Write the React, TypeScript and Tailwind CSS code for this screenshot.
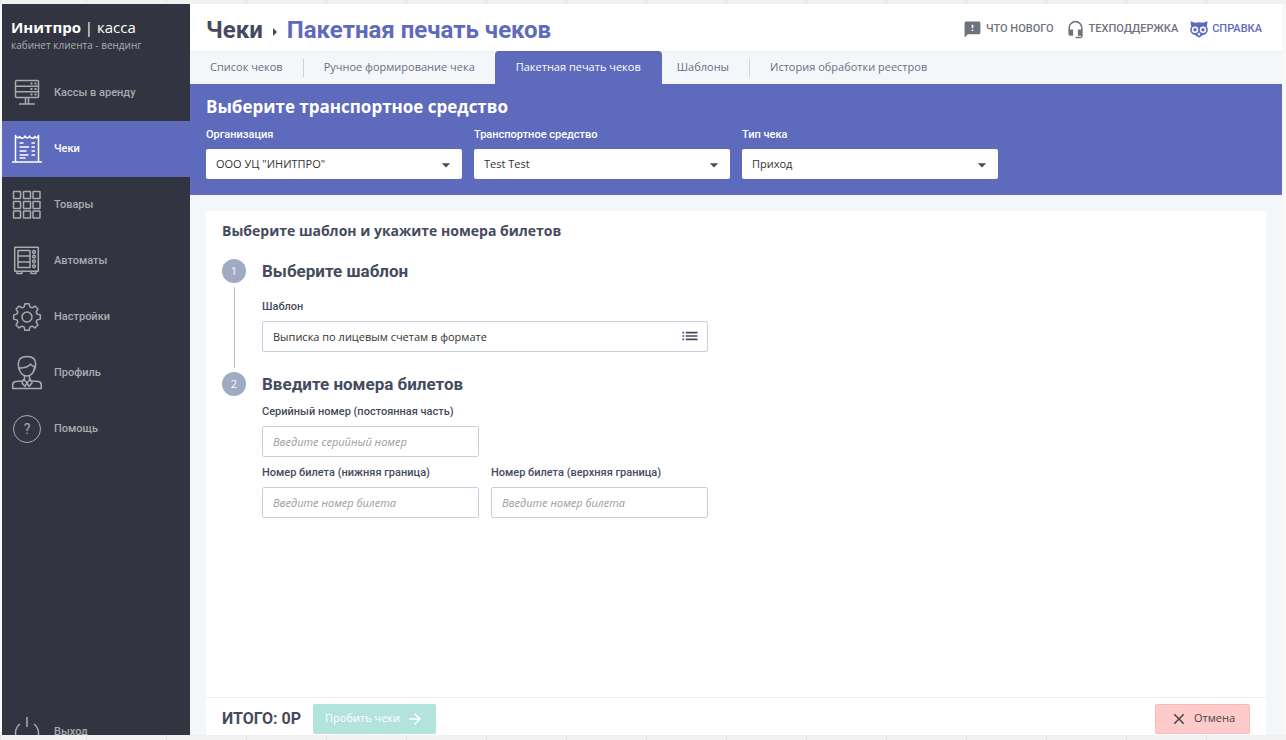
import type { ReactNode } from "react";
import {
  MdArrowForward,
  MdArrowDropDown,
  MdClose,
  MdFeedback,
  MdHeadsetMic,
  MdList,
} from "react-icons/md";

const gearPoints = Array.from({ length: 8 }, (_, i) => i * 45)
  .flatMap((angle) => [
    [10.5, angle - 16],
    [13.5, angle - 9],
    [13.5, angle + 9],
    [10.5, angle + 16],
  ])
  .map(([r, a]) => {
    const rad = (a * Math.PI) / 180;
    return `${(15 + r * Math.cos(rad)).toFixed(2)},${(15 + r * Math.sin(rad)).toFixed(2)}`;
  })
  .join(" ");

function MenuIcon({ children }: { children: ReactNode }) {
  return (
    <svg
      viewBox="0 0 30 30"
      className="h-[30px] w-[30px] shrink-0 overflow-visible"
      fill="none"
      stroke="currentColor"
      strokeWidth="1.5"
      strokeLinejoin="round"
      aria-hidden="true"
    >
      {children}
    </svg>
  );
}

const menu = [
  {
    label: "Кассы в аренду",
    icon: (
      <MenuIcon>
        <rect x="3.5" y="2.5" width="23" height="17" rx="1" />
        <path d="M3.5 8.2h23M3.5 13.8h23M13.5 19.5v6M16.5 19.5v6M7 26h16" />
        <path d="M18.5 5.4h2M22.5 5.4h2M18.5 11h2M22.5 11h2M18.5 16.6h2M22.5 16.6h2" strokeWidth="2" />
      </MenuIcon>
    ),
  },
  {
    label: "Чеки",
    active: true,
    icon: (
      <MenuIcon>
        <path d="M3.500 28V1.500C4 4 7 4.500 7.500 2.500 9 5 12 5 13 2c1 2.500 3.500 2.500 4.500 0 1 3 4 3 5.500.5.500 2 3 1.500 3.500-1V28M0 28h30" />
        <path d="M7.500 9h4M7.500 13h9.500M7.500 17h7M7.500 21h9M7.500 24h6M19.500 9h3.500M19.500 13h3.500M19.500 17h3.500M19.500 21h3.500" />
      </MenuIcon>
    ),
  },
  {
    label: "Товары",
    icon: (
      <MenuIcon>
        {[1.5, 11.5, 21].map((y) =>
          [1.5, 11.5, 21].map((x) => (
            <rect key={`${x}-${y}`} x={x} y={y} width="7" height="7" rx="0.5" />
          ))
        )}
      </MenuIcon>
    ),
  },
  {
    label: "Автоматы",
    icon: (
      <MenuIcon>
        <rect x="2.7" y="1.2" width="23.6" height="24" rx="0.5" />
        <rect x="6" y="4.500" width="12" height="17" />
        <path d="M6 10h12M6 16h12M5 25.500v2h5v-2M19 25.500v2h5v-2" />
        <circle cx="22" cy="6" r="1.4" />
        <circle cx="22" cy="10.700" r="1.4" />
        <circle cx="22" cy="15.500" r="1.4" />
        <circle cx="22" cy="20.300" r="1.4" />
      </MenuIcon>
    ),
  },
  {
    label: "Настройки",
    icon: (
      <MenuIcon>
        <polygon points={gearPoints} />
        <circle cx="15" cy="15" r="5" />
      </MenuIcon>
    ),
  },
  {
    label: "Профиль",
    icon: (
      <MenuIcon>
        <path d="M8 12.500C6.300 10.500 6.300 8 6.300 6c0-5 3.700-7.500 8.700-7.500s8.700 2.500 8.700 7.500c0 2 0 4.500-1.700 6.500" />
        <path d="M7 10c5 .3 8.500-.5 11.500-4 .8 1.500 2 2 4 2.500 0 6-3.500 9.500-7.500 9.500S7.300 14.500 7 10Z" />
        <path d="M12.500 18v3.500M17.500 18v3.500M15 24.500l-3.500-3-1.500 3.500 3 3.500 2-4 2 4 3-3.500-1.500-3.500Z" />
        <path d="M10.500 23l-7 .6C1.500 24 .7 25.500.7 27v3.500h28.600V27c0-1.500-.8-3-2.800-3.400l-7-.6" />
      </MenuIcon>
    ),
  },
  {
    label: "Помощь",
    icon: (
      <span className="flex h-7 w-[30px] items-center justify-center" aria-hidden="true">
        <span className="flex h-7 w-7 items-center justify-center rounded-full border border-current text-sm font-normal">
          ?
        </span>
      </span>
    ),
  },
];

function MenuItem({ label, icon, active }: { label: string; icon: ReactNode; active?: boolean }) {
  return (
    <a
      href="#"
      className={`flex h-14 shrink-0 items-center gap-3 px-2.5 font-[Roboto,sans-serif] text-[11px] font-medium ${
        active ? "bg-[#5e6abc] text-white" : "text-[#a9abb0]"
      }`}
    >
      {icon}
      {label}
    </a>
  );
}

const tabs = [
  { label: "Список чеков" },
  { label: "Ручное формирование чека" },
  { label: "Пакетная печать чеков", active: true },
  { label: "Шаблоны" },
  { label: "История обработки реестров" },
];

const filters = [
  { id: "org", label: "Организация", value: 'ООО УЦ "ИНИТПРО"' },
  { id: "vehicle", label: "Транспортное средство", value: "Test Test" },
  { id: "type", label: "Тип чека", value: "Приход" },
];

function Field({ id, label, placeholder }: { id: string; label: string; placeholder: string }) {
  return (
    <div className="w-[217px]">
      <label htmlFor={id} className="block font-[Roboto,sans-serif] text-[11px] leading-4 font-medium">
        {label}
      </label>
      <input
        id={id}
        placeholder={placeholder}
        className="mt-1.5 h-[31px] w-full rounded-xs border border-[#c5d0e0] px-2.5 text-[11px] placeholder:text-[#9b9b9b] placeholder:italic"
      />
    </div>
  );
}

function StepNumber({ value }: { value: number }) {
  return (
    <span className="flex h-6 w-6 shrink-0 items-center justify-center rounded-full bg-[#a1aac3] text-[11px] text-white">
      {value}
    </span>
  );
}

function OwlIcon() {
  return (
    <svg viewBox="0 0 18 17" className="h-[17px] w-[18px]" fill="currentColor" aria-hidden="true">
      <path d="M.7.3 5 1.800c2.600-.7 5.400-.7 8 0L17.300.3c.2 2-.1 3.700-.6 5.200.8 1 1.100 2 1.100 3.200 0 2.700-2 4.900-4.700 5.200L9 16.800l-4.100-2.900C2.200 13.600.2 11.400.2 8.700c0-1.200.4-2.200 1.100-3.200C.8 4 .5 2.300.7.3Z" />
      <circle cx="5" cy="8.800" r="3.200" fill="#fff" />
      <circle cx="13" cy="8.800" r="3.200" fill="#fff" />
      <circle cx="5" cy="8.800" r="1.700" />
      <circle cx="13" cy="8.800" r="1.700" />
      <path d="M9 11.500l1.500 1.700L9 15l-1.500-1.800Z" fill="#fff" />
    </svg>
  );
}

export default function App() {
  return (
    <div className="h-screen bg-[repeating-linear-gradient(90deg,#f1f1f1_0_79px,#e4e4e4_79px_80px)] bg-[position:7px_0] pt-1 pb-[5px] font-['Open_Sans',sans-serif] text-[#454b5e]">
      <div className="flex h-full bg-[#f8f8f8] pr-1 pl-0.5">
        <aside className="flex w-[188px] shrink-0 flex-col overflow-hidden bg-[#323541]">
          <div className="h-[61px] shrink-0 px-[9px] pt-[11px]">
            <div className="text-[15px] leading-6 text-white">
              <b>Инитпро</b> | касса
            </div>
            <div className="text-[10px] leading-3 text-[#a9abb0]">кабинет клиента - вендинг</div>
          </div>
          <nav className="flex min-h-0 flex-1 flex-col">
            {menu.map((item) => (
              <MenuItem key={item.label} {...item} />
            ))}
          </nav>
          <div className="h-[31px] shrink-0 overflow-hidden">
            <MenuItem
              label="Выход"
              icon={
                <MenuIcon>
                  <path d="M15 0v10M8 7a11.500 11.500 0 1 0 14 0" />
                </MenuIcon>
              }
            />
          </div>
        </aside>

        <main className="flex min-w-0 flex-1 flex-col bg-[#f3f7fa]">
          <header className="z-10 flex h-[47px] shrink-0 items-center justify-between bg-white pt-1 pr-5 pl-4 font-[Roboto,sans-serif] shadow-xs">
            <h1 className="flex items-center text-2xl font-bold">
              Чеки
              <svg viewBox="0 0 4 8" className="mx-2.5 mt-1 h-2 w-1" fill="currentColor" aria-hidden="true">
                <path d="M0 0l4 4-4 4Z" />
              </svg>
              <span className="text-[#5e6abc]">Пакетная печать чеков</span>
            </h1>
            <div className="flex items-center gap-3 text-[11px] font-medium text-[#6f737e]">
              <a href="#" className="flex items-center gap-1">
                <MdFeedback size={19} />
                ЧТО НОВОГО
              </a>
              <a href="#" className="flex items-center gap-1">
                <MdHeadsetMic size={19} />
                ТЕХПОДДЕРЖКА
              </a>
              <a href="#" className="flex items-center gap-1 text-[#5e6abc]">
                <OwlIcon />
                СПРАВКА
              </a>
            </div>
          </header>

          <nav className="flex h-[33px] shrink-0 items-center text-[11px] text-[#6b7080]">
            {tabs.map((tab, i) => (
              <a
                key={tab.label}
                href="#"
                className={
                  tab.active
                    ? "flex h-full items-center rounded-t bg-[#5e6abc] px-[21px] text-white"
                    : `flex h-[18px] items-center pr-5 ${i === 0 ? "pl-5" : i === 3 ? "pl-[15px]" : "border-l border-[#cdd2d9] pl-5"}`
                }
              >
                {tab.label}
              </a>
            ))}
          </nav>

          <section className="h-[111px] shrink-0 bg-[#5e6abc] px-4 pt-[11px] text-white">
            <h2 className="text-[17px] leading-6 font-bold">Выберите транспортное средство</h2>
            <div className="mt-2 flex gap-3">
              {filters.map((f) => (
                <div key={f.id} className="w-64">
                  <label
                    htmlFor={f.id}
                    className="block font-[Roboto,sans-serif] text-[11px] leading-4 font-medium"
                  >
                    {f.label}
                  </label>
                  <div className="relative mt-1.5">
                    <select
                      id={f.id}
                      className="h-[30px] w-full appearance-none rounded-xs bg-white px-2.5 text-[11px] text-[#333]"
                    >
                      <option>{f.value}</option>
                    </select>
                    <MdArrowDropDown
                      size={20}
                      className="pointer-events-none absolute top-1.5 right-1.5 text-[#454b5e]"
                    />
                  </div>
                </div>
              ))}
            </div>
          </section>

          <section className="mx-4 mt-4 flex min-h-0 flex-1 flex-col bg-white">
            <div className="flex-1 px-4 pt-2">
              <h2 className="text-sm leading-6 font-bold">Выберите шаблон и укажите номера билетов</h2>
              <div className="mt-4 flex gap-4">
                <div className="flex flex-col items-center">
                  <StepNumber value={1} />
                  <span className="my-1 w-px flex-1 bg-[#b4bbd0]" />
                </div>
                <div className="h-[113px]">
                  <h3 className="font-[Roboto,sans-serif] text-[17px] leading-6 font-bold">Выберите шаблон</h3>
                  <label
                    htmlFor="template"
                    className="mt-4 block font-[Roboto,sans-serif] text-[11px] leading-4 font-medium"
                  >
                    Шаблон
                  </label>
                  <div className="relative mt-1.5 w-[446px]">
                    <input
                      id="template"
                      defaultValue="Выписка по лицевым счетам в формате"
                      className="h-[31px] w-full rounded-xs border border-[#c5d0e0] pr-9 pl-2.5 text-[11px] text-[#333]"
                    />
                    <button type="button" aria-label="Список шаблонов" className="absolute top-[5px] right-2">
                      <MdList size={20} />
                    </button>
                  </div>
                </div>
              </div>
              <div className="flex gap-4">
                <StepNumber value={2} />
                <div>
                  <h3 className="font-[Roboto,sans-serif] text-[17px] leading-6 font-bold">
                    Введите номера билетов
                  </h3>
                  <div className="mt-2 flex flex-col gap-2">
                    <Field
                      id="serial"
                      label="Серийный номер (постоянная часть)"
                      placeholder="Введите серийный номер"
                    />
                    <div className="flex gap-3">
                      <Field id="from" label="Номер билета (нижняя граница)" placeholder="Введите номер билета" />
                      <Field id="to" label="Номер билета (верхняя граница)" placeholder="Введите номер билета" />
                    </div>
                  </div>
                </div>
              </div>
            </div>

            <footer className="flex h-[38px] shrink-0 items-center justify-between border-t border-[#ececee] px-4 pt-1">
              <div className="flex items-center gap-3">
                <span className="font-[Roboto,sans-serif] text-base font-bold">ИТОГО: 0Р</span>
                <button
                  type="button"
                  className="flex h-[30px] items-center gap-1.5 rounded-xs bg-[#b2e4dd] px-3 text-[11px] text-white"
                >
                  Пробить чеки
                  <MdArrowForward size={18} />
                </button>
              </div>
              <button
                type="button"
                className="flex h-[30px] items-center gap-1.5 rounded-xs border border-[#f5bcbe] bg-[#ffcaca] px-3.5 text-[11px] text-[#454545]"
              >
                <MdClose size={18} />
                Отмена
              </button>
            </footer>
          </section>
        </main>
      </div>
    </div>
  );
}
